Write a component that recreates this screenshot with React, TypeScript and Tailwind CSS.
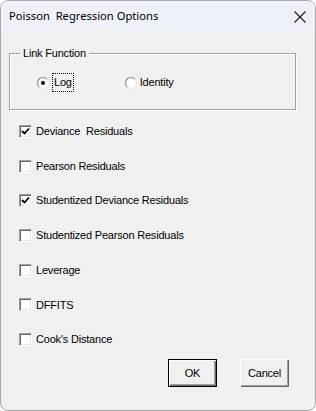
import React from 'react';

const checks = [
    { label: 'Deviance\u00a0 Residuals', checked: true },
    { label: 'Pearson Residuals', checked: false },
    { label: 'Studentized Deviance Residuals', checked: true },
    { label: 'Studentized Pearson Residuals', checked: false },
    { label: 'Leverage', checked: false },
    { label: 'DFFITS', checked: false },
    { label: "Cook's Distance", checked: false },
];

const CheckBox: React.FC<{ checked: boolean }> = ({ checked }) => (
    <span className="flex h-[13px] w-[13px] items-center justify-center border border-t-[#a0a0a0] border-l-[#a0a0a0] border-b-white border-r-white bg-white shadow-[inset_1px_1px_0_#696969,inset_-1px_-1px_0_#e3e3e3]">
        {checked && (
            <svg width="9" height="9" viewBox="0 0 9 9">
                <path d="M1 4 L3.5 6.5 L8 1.5" fill="none" stroke="#000" strokeWidth="1.8" />
            </svg>
        )}
    </span>
);

const Radio: React.FC<{ selected: boolean }> = ({ selected }) => (
    <span className="flex h-[12px] w-[12px] items-center justify-center rounded-full border border-t-[#7a7a7a] border-l-[#7a7a7a] border-b-[#e8e8e8] border-r-[#e8e8e8] bg-white">
        {selected && <span className="h-[4px] w-[4px] rounded-full bg-black" />}
    </span>
);

const App: React.FC = () => {
    return (
        <div className="flex h-[411px] w-[316px] flex-col overflow-hidden rounded-[8px] border border-[#a8a8a8] bg-[#f0f0f0] font-['Liberation_Sans',Arial,sans-serif] text-[11px] tracking-[-0.2px] text-black">
            {/* title bar */}
            <div className="flex h-[30px] shrink-0 items-center justify-between bg-[#eef2f8] pl-[8px] pr-[9px]">
                <span className="font-['Noto_Sans',sans-serif] text-[11.2px] tracking-normal whitespace-pre">Poisson  Regression Options</span>
                <svg width="12" height="12" viewBox="0 0 12 12" className="mt-[1px]">
                    <path d="M0.5 0.5 L11.5 11.5 M11.5 0.5 L0.5 11.5" stroke="#1a1a1a" strokeWidth="1.1" />
                </svg>
            </div>

            <div className="flex flex-1 flex-col pl-[8px] pr-[20px] pt-[22px]">
                {/* group box */}
                <div className="relative h-[57px] w-[287px] border border-[#a0a0a0] shadow-[1px_1px_0_#fff,inset_1px_1px_0_#fff]">
                    <span className="absolute -top-[8px] left-[10px] bg-[#f0f0f0] px-[3px] leading-[14px]">Link Function</span>
                    <div className="flex items-center pl-[27px] pt-[19px]">
                        <Radio selected />
                        <span className="ml-[3px] border border-dotted border-black px-[1px] py-[2px] leading-[13px]">Log</span>
                        <span className="ml-[51px]">
                            <Radio selected={false} />
                        </span>
                        <span className="ml-[3px]">Identity</span>
                    </div>
                </div>

                {/* options */}
                <div className="mt-[4px] flex flex-col pl-[10px]">
                    {checks.map((c) => (
                        <div key={c.label} className="flex h-[34.7px] items-center">
                            <CheckBox checked={c.checked} />
                            <span className="ml-[4px]">{c.label}</span>
                        </div>
                    ))}
                </div>

                {/* buttons */}
                <div className="mt-[2px] flex justify-end gap-[23px] pr-[6px]">
                    <button className="h-[28px] w-[49px] border border-black bg-[#f0f0f0] shadow-[inset_1px_1px_0_#fff,inset_-1px_-1px_0_#696969,inset_-2px_-2px_0_#a0a0a0]">
                        OK
                    </button>
                    <button className="h-[28px] w-[49px] bg-[#f0f0f0] shadow-[inset_1px_1px_0_#fff,inset_-1px_-1px_0_#696969,inset_-2px_-2px_0_#a0a0a0]">
                        Cancel
                    </button>
                </div>
            </div>
        </div>
    );
};

export default App;
